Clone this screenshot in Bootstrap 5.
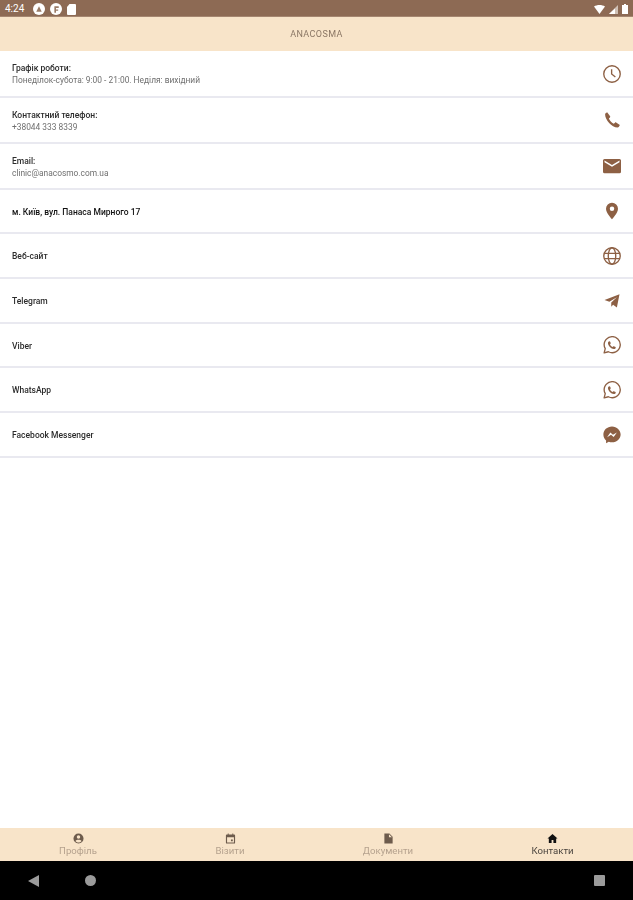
<!DOCTYPE html>
<html lang="uk">
<head>
    <meta charset="UTF-8">
    <meta name="viewport" content="width=device-width, initial-scale=1.0">
    <title>Контакти</title>
    <link href="https://cdn.jsdelivr.net/npm/bootstrap@5.3.2/dist/css/bootstrap.min.css" rel="stylesheet">
    <style>
        html, body { height: 100%; }
        body { font-family: Roboto, "Liberation Sans", sans-serif; background: #fff; overflow: hidden; }
        .app-shell { height: 900px; filter: blur(.35px); }
        .status-strip { height: 17px; background: #8d6a54; color: #fff; font-size: 10px; line-height: 12px; padding: 2px 5px 0; border-bottom: 1px solid #a58670; }
        .status-strip svg { display: block; }
        .status-time { width: 28px; }
        .status-icons { gap: 5px; }
        .top-title { height: 34px; background: #f8e4c9; color: #8b7765; font-size: 9px; letter-spacing: .4px; padding-top: 2px; }
        .contact-row { padding: 0 12px; border-bottom: 2px solid #e9e9f0; }
        .row-h47 { height: 47px; }
        .row-h46 { height: 46px; }
        .row-h45 { height: 45px; }
        .row-h44 { height: 44px; }
        .row-label { font-size: 8.5px; line-height: 11px; color: #2c2c2c; font-weight: 500; padding-top: 2px; }
        .row-sub { font-size: 8.4px; line-height: 11px; color: #6f6f6f; padding-top: 1px; }
        .row-strong { color: #111; }
        .row-icon { width: 18px; height: 18px; color: #8d6044; flex: none; }
        .tab-strip { height: 33px; background: #f8e4c9; }
        .tab-item { font-size: 9.6px; line-height: 11px; color: #b5a28e; padding-top: 5px; }
        .tab-item svg { width: 11px; height: 11px; display: block; color: #6d5b4c; margin-bottom: 1px; }
        .tab-w1 { width: 156px; }
        .tab-w2 { width: 148px; }
        .tab-w3 { width: 168px; }
        .tab-w4 { width: 161px; }
        .tab-on { color: #4a443e; }
        .tab-on svg { color: #111; }
        .sys-nav { height: 39px; background: #000; padding-left: 28px; padding-right: 28px; }
        .sys-nav svg { display: block; }
        .sys-home { margin-left: 46px; }
    </style>
</head>
<body>
    <div class="app-shell d-flex flex-column">
        <div class="status-strip d-flex align-items-center">
            <span class="status-time">4:24</span>
            <span class="status-icons d-flex align-items-center">
                <svg width="12" height="12" viewBox="0 0 11 11"><circle cx="5.5" cy="5.5" r="5.5" fill="#fff"/><path d="M3 8l2.500-5L8 8z" fill="#9a7b66"/></svg>
                <svg width="12" height="12" viewBox="0 0 11 11"><circle cx="5.5" cy="5.5" r="5.5" fill="#fff"/><path d="M4 9V3h4v1.500H5.500V6H7.500v1.200H5.500V9z" fill="#9a7b66"/></svg>
                <svg width="9" height="11" viewBox="0 0 9 11"><path d="M2.500 0H8a1 1 0 0 1 1 1v9a1 1 0 0 1-1 1H1a1 1 0 0 1-1-1V3z" fill="#fff"/></svg>
            </span>
            <span class="ms-auto d-flex align-items-center gap-1">
                <svg width="11" height="9" viewBox="0 0 11 9"><path d="M0 1.500C3-.5 8-.5 11 1.500L5.500 9z" fill="#fff"/></svg>
                <svg width="9" height="9" viewBox="0 0 9 9"><path d="M9 0v9H0z" fill="#cfc0b5"/><path d="M6 3.500V9H0z" fill="#fff"/></svg>
                <svg width="6" height="10" viewBox="0 0 6 10"><path d="M2 0h2v1h2v9H0V1h2z" fill="#fff"/></svg>
            </span>
        </div>

        <div class="top-title d-flex align-items-center justify-content-center">ANACOSMA</div>

        <div class="list-group list-group-flush flex-grow-1">
            <div class="contact-row row-h47 d-flex align-items-center justify-content-between">
                <div>
                    <div class="row-label">Графік роботи:</div>
                    <div class="row-sub">Понеділок-субота: 9:00 - 21:00. Неділя: вихідний</div>
                </div>
                <svg class="row-icon" viewBox="0 0 24 24" fill="none" stroke="currentColor" stroke-width="1.800"><circle cx="12" cy="12" r="11"/><path d="M11.500 5.500V12l5 4"/></svg>
            </div>
            <div class="contact-row row-h46 d-flex align-items-center justify-content-between">
                <div>
                    <div class="row-label">Контактний телефон:</div>
                    <div class="row-sub">+38044 333 8339</div>
                </div>
                <svg class="row-icon" viewBox="0 0 24 24" fill="currentColor"><path d="M5.500 1.500 9.500 7c.3.5.2 1-.2 1.500L7.800 10c1.200 3 3.500 5.500 6.500 7l1.700-1.500c.4-.4 1-.5 1.500-.2l5 3.200-1.300 2.500c-.4.700-1 1-1.800 1C11.500 21.500 3 12 2.800 4.500c0-.7.200-1.200.7-1.600z"/></svg>
            </div>
            <div class="contact-row row-h46 d-flex align-items-center justify-content-between">
                <div>
                    <div class="row-label">Email:</div>
                    <div class="row-sub">clinic@anacosmo.com.ua</div>
                </div>
                <svg class="row-icon" viewBox="0 0 24 24" fill="currentColor"><path d="M2 2.500h20a2 2 0 0 1 2 2v15a2 2 0 0 1-2 2H2a2 2 0 0 1-2-2v-15a2 2 0 0 1 2-2zm0 4.500 10 6 10-6V4.800l-10 6-10-6z"/></svg>
            </div>
            <div class="contact-row row-h44 d-flex align-items-center justify-content-between">
                <div class="row-label row-strong">м. Київ, вул. Панаса Мирного 17</div>
                <svg class="row-icon" viewBox="0 0 24 24" fill="currentColor"><path fill-rule="evenodd" d="M12 1a8 8 0 0 1 8 8c0 5.500-8 14-8 14S4 14.500 4 9a8 8 0 0 1 8-8zm0 5a3 3 0 1 0 0 6 3 3 0 0 0 0-6z"/></svg>
            </div>
            <div class="contact-row row-h45 d-flex align-items-center justify-content-between">
                <div class="row-label">Веб-сайт</div>
                <svg class="row-icon" viewBox="0 0 24 24" fill="none" stroke="currentColor" stroke-width="1.800"><circle cx="12" cy="12" r="11"/><ellipse cx="12" cy="12" rx="5" ry="11"/><path d="M1.500 8.500h21M1.500 15.500h21"/></svg>
            </div>
            <div class="contact-row row-h45 d-flex align-items-center justify-content-between">
                <div class="row-label">Telegram</div>
                <svg class="row-icon" viewBox="0 0 24 24" fill="currentColor"><path d="M22 3 18.500 20.500l-5-3.500-2.500 2.500V14l7.500-7-10 6L2 10.500z"/></svg>
            </div>
            <div class="contact-row row-h44 d-flex align-items-center justify-content-between">
                <div class="row-label">Viber</div>
                <svg class="row-icon" viewBox="0 0 24 24"><use href="#chat-phone"/></svg>
            </div>
            <div class="contact-row row-h45 d-flex align-items-center justify-content-between">
                <div class="row-label">WhatsApp</div>
                <svg class="row-icon" viewBox="0 0 24 24"><use href="#chat-phone"/></svg>
            </div>
            <div class="contact-row row-h45 d-flex align-items-center justify-content-between">
                <div class="row-label">Facebook Messenger</div>
                <svg class="row-icon" viewBox="0 0 24 24" fill="currentColor"><path fill-rule="evenodd" d="M12 .500C5.500.500.500 5.300.500 11.300c0 3.200 1.300 6 3.600 7.900v3.900l3.600-2c1.300.5 2.800.7 4.300.7 6.500 0 11.500-4.800 11.500-10.500S18.500.500 12 .500zM5.500 15l4.300-6.300 3.500 3 5.200-3.200-4.300 6.300-3.500-3z"/></svg>
            </div>
        </div>

        <div class="tab-strip d-flex">
            <div class="tab-item tab-w1 d-flex flex-column align-items-center">
                <svg viewBox="0 0 24 24" fill="currentColor"><path fill-rule="evenodd" d="M12 1a11 11 0 1 0 0 22 11 11 0 0 0 0-22zm0 4a3.800 3.800 0 1 1 0 7.600A3.800 3.800 0 0 1 12 5zm0 15.500c-2.800 0-5.200-1.200-6.600-3.300 1-1.700 4-2.600 6.600-2.600s5.600.9 6.600 2.600c-1.400 2.100-3.800 3.300-6.600 3.300z"/></svg>
                <span>Профіль</span>
            </div>
            <div class="tab-item tab-w2 d-flex flex-column align-items-center">
                <svg viewBox="0 0 24 24" fill="currentColor"><path fill-rule="evenodd" d="M6 1h2v2h8V1h2v2h2a2 2 0 0 1 2 2v16a2 2 0 0 1-2 2H4a2 2 0 0 1-2-2V5a2 2 0 0 1 2-2h2zM4.500 9v11.500h15V9zM13 14h4v4h-4z"/></svg>
                <span>Візити</span>
            </div>
            <div class="tab-item tab-w3 d-flex flex-column align-items-center">
                <svg viewBox="0 0 24 24" fill="currentColor"><path d="M3 1h11l7 7v15H3zM13 2.500V9h6.500z"/></svg>
                <span>Документи</span>
            </div>
            <div class="tab-item tab-on tab-w4 d-flex flex-column align-items-center">
                <svg viewBox="0 0 24 24" fill="currentColor"><path d="M12 2 1 12h3v10h6v-7h4v7h6V12h3z"/></svg>
                <span>Контакти</span>
            </div>
        </div>

        <div class="sys-nav d-flex align-items-center">
            <svg width="11" height="12" viewBox="0 0 12 13"><path d="M12 0v13L0 6.500z" fill="#9b9b9b"/></svg>
            <svg class="sys-home" width="11" height="11" viewBox="0 0 11 11"><circle cx="5.500" cy="5.500" r="5.500" fill="#9b9b9b"/></svg>
            <svg class="ms-auto" width="11" height="11" viewBox="0 0 11 11"><rect width="11" height="11" rx="1" fill="#9b9b9b"/></svg>
        </div>
    </div>

    <svg width="0" height="0" class="d-none">
        <symbol id="chat-phone" viewBox="0 0 24 24">
            <path d="M1.500 22.500l1.500-5.600A10.700 10.700 0 1 1 7.200 21z" fill="none" stroke="#8d6044" stroke-width="1.800" stroke-linejoin="round"/>
            <path d="M8.800 7c.8 0 1.200 1.700 1.500 2.600.1.500-1 1.300-.9 1.700.6 1.400 1.800 2.600 3.300 3.200.5.100 1.200-1 1.700-.9.900.3 2.600 1 2.600 1.600 0 1.300-1.300 2.200-2.500 2.200C10.800 17.400 6.600 13 6.600 9.400 6.600 8.200 7.500 7 8.800 7z" fill="#8d6044"/>
        </symbol>
    </svg>

    <script src="https://cdn.jsdelivr.net/npm/bootstrap@5.3.2/dist/js/bootstrap.bundle.min.js"></script>
</body>
</html>
